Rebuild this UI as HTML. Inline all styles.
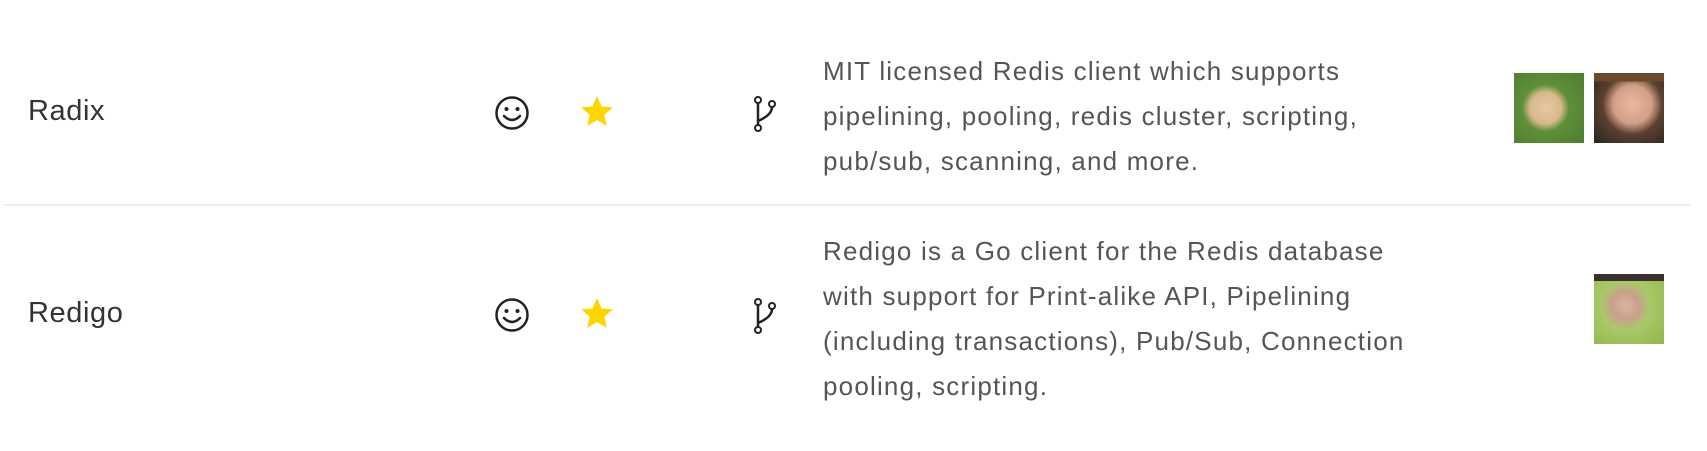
<!DOCTYPE html>
<html><head><meta charset="utf-8"><style>
body{margin:0;width:1707px;height:451px;background:#fff;font-family:"Liberation Sans",sans-serif;position:relative;overflow:hidden}
.name{position:absolute;left:28px;font-size:29px;color:#333;letter-spacing:0.6px}
.desc{position:absolute;left:823px;font-size:26px;line-height:45px;color:#555;white-space:nowrap;letter-spacing:1.2px}
.ic{position:absolute}
.av{position:absolute;width:70px;height:70px}
.hr{position:absolute;left:4px;width:1686px;top:204px;height:2px;background:#eee}
</style></head><body>

<div class="name" style="top:95px">Radix</div>
<svg class="ic" style="left:494px;top:95px" width="36" height="36" viewBox="0 0 36 36"><circle cx="18" cy="18" r="15.5" fill="none" stroke="#222" stroke-width="2.5"/><circle cx="12.5" cy="14" r="2" fill="#222"/><circle cx="23.5" cy="14" r="2" fill="#222"/><path d="M10 21 Q18 29 26 21" fill="none" stroke="#222" stroke-width="2.5" stroke-linecap="round"/></svg>
<svg class="ic" style="left:578px;top:93px" width="38" height="38" viewBox="0 0 24 24"><path d="M12 2l2.9 6.5 7.1.6-5.4 4.7 1.6 7-6.2-3.7-6.2 3.7 1.6-7L2 9.1l7.1-.6z" fill="#ffd500"/></svg>
<svg class="ic" style="left:750px;top:95px" width="30" height="38" viewBox="0 0 30 38"><circle cx="8" cy="5" r="3" fill="none" stroke="#222" stroke-width="2"/><circle cx="22" cy="9" r="3" fill="none" stroke="#222" stroke-width="2"/><circle cx="8" cy="33" r="3" fill="none" stroke="#222" stroke-width="2"/><path d="M8 8v22M22 12q0 8-14 14" fill="none" stroke="#222" stroke-width="2.5"/></svg>
<div class="desc" style="top:49px">MIT licensed Redis client which supports<br>pipelining, pooling, redis cluster, scripting,<br>pub/sub, scanning, and more.</div>
<div class="av" style="left:1514px;top:73px;background:radial-gradient(circle at 45% 50%,#e6c9a0 0,#d8b98c 30%,#5f8f3a 45%,#4d7d2e 100%)"></div>
<div class="av" style="left:1594px;top:73px;background:linear-gradient(#6b4a2c 0,#6b4a2c 12%,transparent 12%),radial-gradient(ellipse at 55% 45%,#e8b9a0 0,#d49f86 35%,#5a4030 55%,#2a2420 100%)"></div>

<div class="hr"></div>

<div class="name" style="top:297px">Redigo</div>
<svg class="ic" style="left:494px;top:297px" width="36" height="36" viewBox="0 0 36 36"><circle cx="18" cy="18" r="15.5" fill="none" stroke="#222" stroke-width="2.5"/><circle cx="12.5" cy="14" r="2" fill="#222"/><circle cx="23.5" cy="14" r="2" fill="#222"/><path d="M10 21 Q18 29 26 21" fill="none" stroke="#222" stroke-width="2.5" stroke-linecap="round"/></svg>
<svg class="ic" style="left:578px;top:295px" width="38" height="38" viewBox="0 0 24 24"><path d="M12 2l2.9 6.5 7.1.6-5.4 4.7 1.6 7-6.2-3.7-6.2 3.7 1.6-7L2 9.1l7.1-.6z" fill="#ffd500"/></svg>
<svg class="ic" style="left:750px;top:297px" width="30" height="38" viewBox="0 0 30 38"><circle cx="8" cy="5" r="3" fill="none" stroke="#222" stroke-width="2"/><circle cx="22" cy="9" r="3" fill="none" stroke="#222" stroke-width="2"/><circle cx="8" cy="33" r="3" fill="none" stroke="#222" stroke-width="2"/><path d="M8 8v22M22 12q0 8-14 14" fill="none" stroke="#222" stroke-width="2.5"/></svg>
<div class="desc" style="top:229px">Redigo is a Go client for the Redis database<br>with support for Print-alike API, Pipelining<br>(including transactions), Pub/Sub, Connection<br>pooling, scripting.</div>
<div class="av" style="left:1594px;top:274px;background:linear-gradient(#3a3030 0,#3a3030 10%,transparent 10%),radial-gradient(ellipse at 45% 45%,#d9b6a0 0,#c9a08a 25%,#a9c86a 45%,#8fb848 100%)"></div>

</body></html>
